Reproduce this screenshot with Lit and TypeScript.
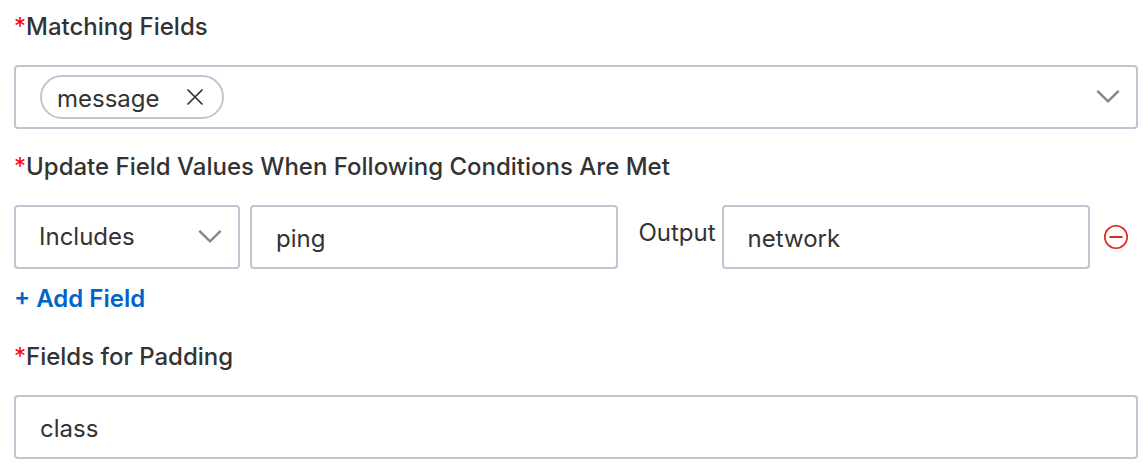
import { LitElement, html, css } from "lit";
import { customElement } from "lit/decorators.js";

const chevron = html`<svg class="chevron" viewBox="0 0 24 14" width="24" height="14" aria-hidden="true">
  <path d="M1.3 0.8 12 11.3 22.7 0.8" fill="none" stroke="#888" stroke-width="2.4" />
</svg>`;

@customElement("app-root")
export class AppRoot extends LitElement {
  static styles = css`
    :host {
      display: block;
      box-sizing: border-box;
      padding: 9px 10px 16px 14px;
      background: #fff;
      color: #333;
      font: 400 24px/36px Inter, "Liberation Sans", sans-serif;
    }
    *, *::before { box-sizing: border-box; }
    form { display: flex; flex-direction: column; gap: 20px; }
    .field { display: flex; flex-direction: column; gap: 20px; }
    .title { font-weight: 500; }
    .star { color: #f00; font-weight: 400; }
    .control {
      width: 100%;
      min-width: 0;
      height: 64px;
      margin: 0;
      border: 2px solid #c0c6d1;
      border-radius: 4px;
      background: #fff;
      color: inherit;
      font: inherit;
      outline: none;
    }
    input.control { padding: 2px 24px 0; }
    .tags { display: flex; align-items: center; justify-content: space-between; padding: 0 16px 0 24px; }
    .tag {
      display: flex;
      align-items: center;
      gap: 26px;
      height: 44px;
      padding: 4px 18px 0 15px;
      border: 2px solid #c0c6d1;
      border-radius: 22px;
    }
    .tag button { padding-bottom: 4px; }
    button { display: flex; margin: 0; padding: 0; border: 0; background: none; font: inherit; cursor: pointer; }
    .row { display: flex; align-items: flex-start; width: 100%; }
    .select { display: grid; flex: 0 0 226px; align-items: center; margin-right: 10px; }
    .select > * { grid-area: 1 / 1; }
    select.control { appearance: none; padding: 0 48px 0 23px; }
    .select .chevron { justify-self: end; margin-right: 18px; pointer-events: none; }
    .row input { flex: 1 1 0; }
    .output { padding: 0 6px 0 20px; line-height: 56px; }
    .remove { align-self: center; padding: 0 10px 0 14px; }
    .group { display: flex; flex-direction: column; align-items: flex-start; gap: 12px; padding-bottom: 2px; }
    .add { color: #0064c8; font-weight: 600; }
  `;

  private heading(text: string) {
    return html`<span class="star">*</span>${text}`;
  }

  render() {
    return html`
      <form>
        <div class="field">
          <div class="title" id="matching">${this.heading("Matching Fields")}</div>
          <div class="control tags" role="group" aria-labelledby="matching">
            <span class="tag">message
              <button type="button" aria-label="Remove message">
                <svg viewBox="0 0 18 18" width="18" height="18"><path d="M1.5 1.5l15 15M16.5 1.5l-15 15" stroke="#333" stroke-width="1.7" /></svg>
              </button>
            </span>
            <button type="button" aria-label="Open field list">${chevron}</button>
          </div>
        </div>
        <div class="field">
          <div class="title">${this.heading("Update Field Values When Following Conditions Are Met")}</div>
          <div class="group">
            <div class="row">
              <div class="select">
                <select class="control" aria-label="Condition"><option>Includes</option></select>
                ${chevron}
              </div>
              <input class="control" aria-label="Value" .value=${"ping"} />
              <label class="output" for="output">Output</label>
              <input class="control" id="output" .value=${"network"} />
              <button class="remove" type="button" aria-label="Remove condition">
                <svg viewBox="0 0 24 24" width="24" height="24" fill="none" stroke="#e1251b">
                  <circle cx="12" cy="12" r="11.2" stroke-width="1.6" />
                  <path d="M5.5 12h13" stroke-width="2" />
                </svg>
              </button>
            </div>
            <button class="add" type="button">+ Add Field</button>
          </div>
        </div>
        <div class="field">
          <label class="title" for="padding">${this.heading("Fields for Padding")}</label>
          <input class="control" id="padding" .value=${"class"} />
        </div>
      </form>
    `;
  }
}
